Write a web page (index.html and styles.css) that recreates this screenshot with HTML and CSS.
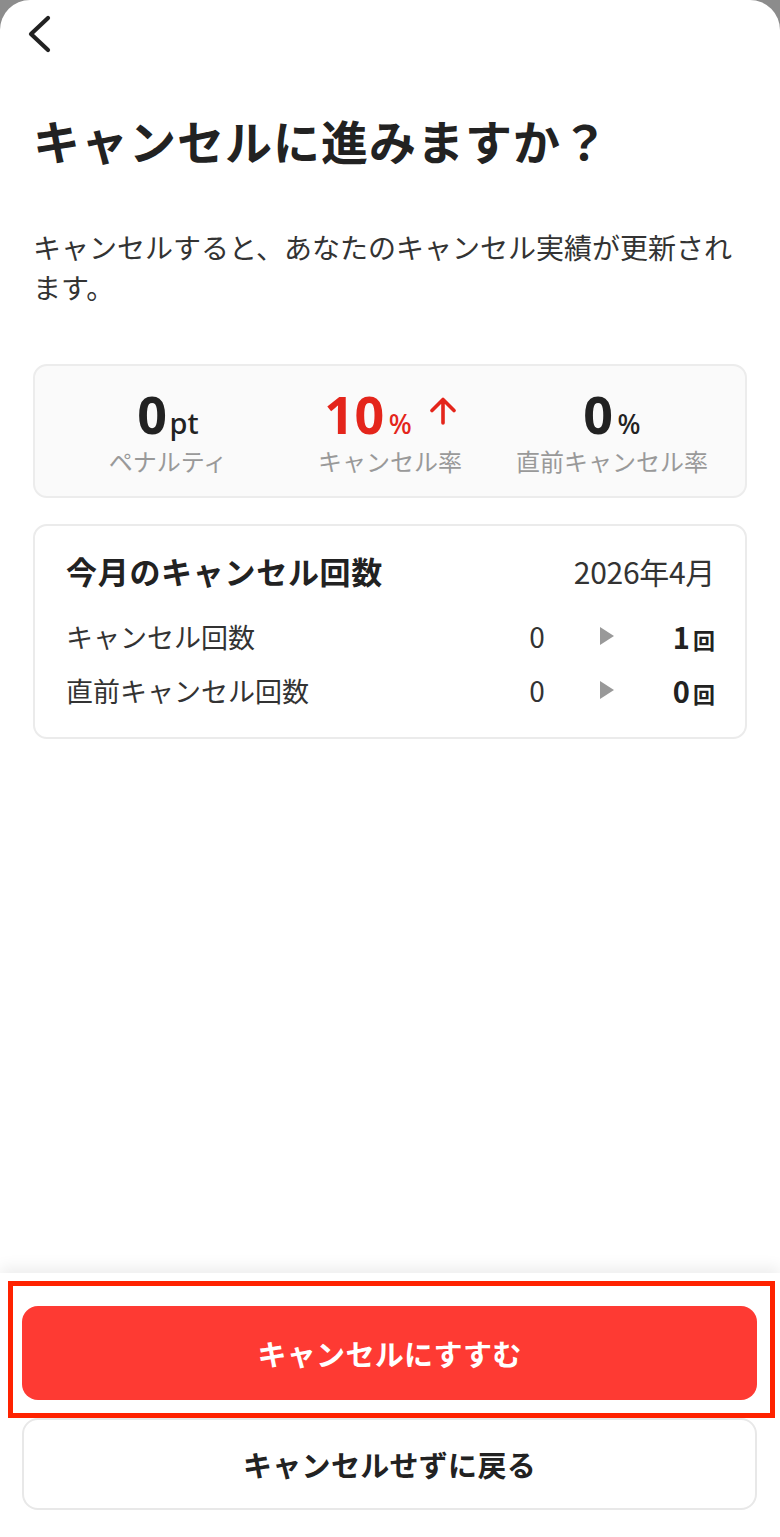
FILE: index.html
```html
<!DOCTYPE html>
<html lang="ja">
<head>
<meta charset="utf-8">
<title>キャンセルに進みますか？</title>
<link rel="stylesheet" href="styles.css">
</head>
<body>
<div class="sheet">
  <main class="main">
    <header class="header">
      <button class="back" aria-label="戻る">
        <svg width="30" height="40" viewBox="0 0 30 40"><path d="M22 4 L5 20 L22 36" fill="none" stroke="#222" stroke-width="4.2" stroke-linecap="round" stroke-linejoin="round"/></svg>
      </button>
    </header>
    <h1 class="title">キャンセルに進みますか？</h1>
    <p class="lead">キャンセルすると、あなたのキャンセル実績が更新されます。</p>

    <section class="stats">
      <div class="stat">
        <div class="stat-value"><span class="num">0</span><span class="unit">pt</span></div>
        <div class="stat-label">ペナルティ</div>
      </div>
      <div class="stat">
        <div class="stat-value red"><span class="num">10</span><span class="unit pct">%</span>
          <svg class="up" width="26" height="28" viewBox="0 0 26 28"><path d="M13 26 V3 M2 13.5 L13 2.5 L24 13.5" fill="none" stroke="#e4251b" stroke-width="3.6" stroke-linecap="round" stroke-linejoin="round"/></svg>
        </div>
        <div class="stat-label">キャンセル率</div>
      </div>
      <div class="stat">
        <div class="stat-value"><span class="num">0</span><span class="unit pct">%</span></div>
        <div class="stat-label">直前キャンセル率</div>
      </div>
    </section>

    <section class="month">
      <div class="month-head">
        <h2 class="month-title">今月のキャンセル回数</h2>
        <span class="month-date">2026年4月</span>
      </div>
      <div class="row">
        <span class="row-label">キャンセル回数</span>
        <span class="row-old">0</span>
        <span class="row-arrow"><svg width="16" height="20" viewBox="0 0 16 20"><path d="M1 1 L15 10 L1 19 Z" fill="#999"/></svg></span>
        <span class="row-new"><b>1</b><small>回</small></span>
      </div>
      <div class="row">
        <span class="row-label">直前キャンセル回数</span>
        <span class="row-old">0</span>
        <span class="row-arrow"><svg width="16" height="20" viewBox="0 0 16 20"><path d="M1 1 L15 10 L1 19 Z" fill="#999"/></svg></span>
        <span class="row-new"><b>0</b><small>回</small></span>
      </div>
    </section>
  </main>

  <footer class="footer">
    <div class="highlight" aria-hidden="true"></div>
    <button class="btn btn-primary">キャンセルにすすむ</button>
    <button class="btn btn-secondary">キャンセルせずに戻る</button>
  </footer>
</div>
</body>
</html>
```

FILE: styles.css
```css
* { box-sizing: border-box; }
html, body { margin: 0; padding: 0; }
body {
  background: #8c8c8c;
  font-family: "Noto Sans CJK JP", "Noto Sans", sans-serif;
  color: #222;
}
.sheet {
  background: #fff;
  border-radius: 30px 30px 0 0;
  min-height: 1537px;
  display: flex;
  flex-direction: column;
}
.main {
  flex: 1;
  padding: 0 33px;
}
.header {
  height: 70px;
  display: flex;
  align-items: center;
}
.back {
  border: 0;
  background: none;
  padding: 0;
  margin-left: -7px;
  margin-top: -2px;
  width: 30px;
  height: 40px;
  display: flex;
}
.title {
  margin: 37px 0 0;
  font-size: 47px;
  line-height: 66px;
  font-weight: 700;
  color: #222;
  letter-spacing: 1px;
}
.lead {
  margin: 54px 0 0;
  font-size: 28px;
  line-height: 40px;
  color: #333;
}
.stats {
  margin-top: 57px;
  background: #fafafa;
  border: 2px solid #ececec;
  border-radius: 14px;
  padding: 20px 22px 19px;
  display: grid;
  grid-template-columns: 1fr 1fr 1fr;
  text-align: center;
}
.stat-value {
  height: 56px;
  display: flex;
  justify-content: center;
  align-items: baseline;
  color: #222;
}
.stat-value .num {
  font-family: "Noto Sans", "Noto Sans CJK JP", sans-serif;
  font-size: 52px;
  line-height: 56px;
  font-weight: 700;
  letter-spacing: 0.5px;
}
.stat-value .unit {
  font-family: "Noto Sans", "Noto Sans CJK JP", sans-serif;
  font-size: 29px;
  font-weight: 500;
  margin-left: 2px;
}
.stat-value .pct {
  font-size: 27px;
  margin-left: 4px;
}
.stat-value.red { color: #e4251b; }
.stat-value .up {
  align-self: center;
  margin-left: 18px;
  margin-top: -6px;
}
.stat-label {
  margin-top: 3px;
  font-size: 24px;
  line-height: 32px;
  color: #999;
}
.month {
  margin-top: 26px;
  border: 2px solid #ebebeb;
  border-radius: 14px;
  padding: 25px 30px 28px 31px;
}
.month-head {
  display: flex;
  justify-content: space-between;
  align-items: baseline;
}
.month-title {
  margin: 0;
  font-size: 31px;
  line-height: 40px;
  font-weight: 700;
  color: #222;
  letter-spacing: 0.7px;
}
.month-date {
  font-size: 30px;
  line-height: 40px;
  color: #333;
  letter-spacing: -0.3px;
}
.row {
  display: grid;
  grid-template-columns: 1fr 56px 84px 66px;
  align-items: center;
  height: 40px;
  font-size: 27px;
  color: #333;
}
.month-head + .row { margin-top: 24px; }
.row + .row { margin-top: 14px; }
.row-old { text-align: center; font-size: 28px; }
.row-arrow { display: flex; justify-content: center; }
.row-new {
  text-align: right;
  color: #222;
}
.row-new b { font-size: 29px; font-weight: 700; }
.row-new small { font-size: 22px; font-weight: 700; margin-left: 3px; }
.footer {
  position: relative;
  background: #fff;
  box-shadow: 0 -6px 14px rgba(0, 0, 0, 0.07);
  padding: 33px 23px 27px 22px;
  display: flex;
  flex-direction: column;
  gap: 18px;
}
.btn {
  width: 100%;
  border-radius: 16px;
  font-family: "Noto Sans CJK JP", "Noto Sans", sans-serif;
  font-size: 29px;
  font-weight: 700;
  letter-spacing: 0.3px;
}
.btn-primary {
  height: 94px;
  background: #fe3a33;
  border: 0;
  color: #fff;
}
.btn-secondary {
  height: 92px;
  background: #fff;
  border: 2px solid #e8e8e8;
  color: #222;
}
.highlight {
  position: absolute;
  left: 8px;
  right: 5px;
  top: 8px;
  height: 137px;
  border: 5px solid #ff2200;
  pointer-events: none;
}
```
